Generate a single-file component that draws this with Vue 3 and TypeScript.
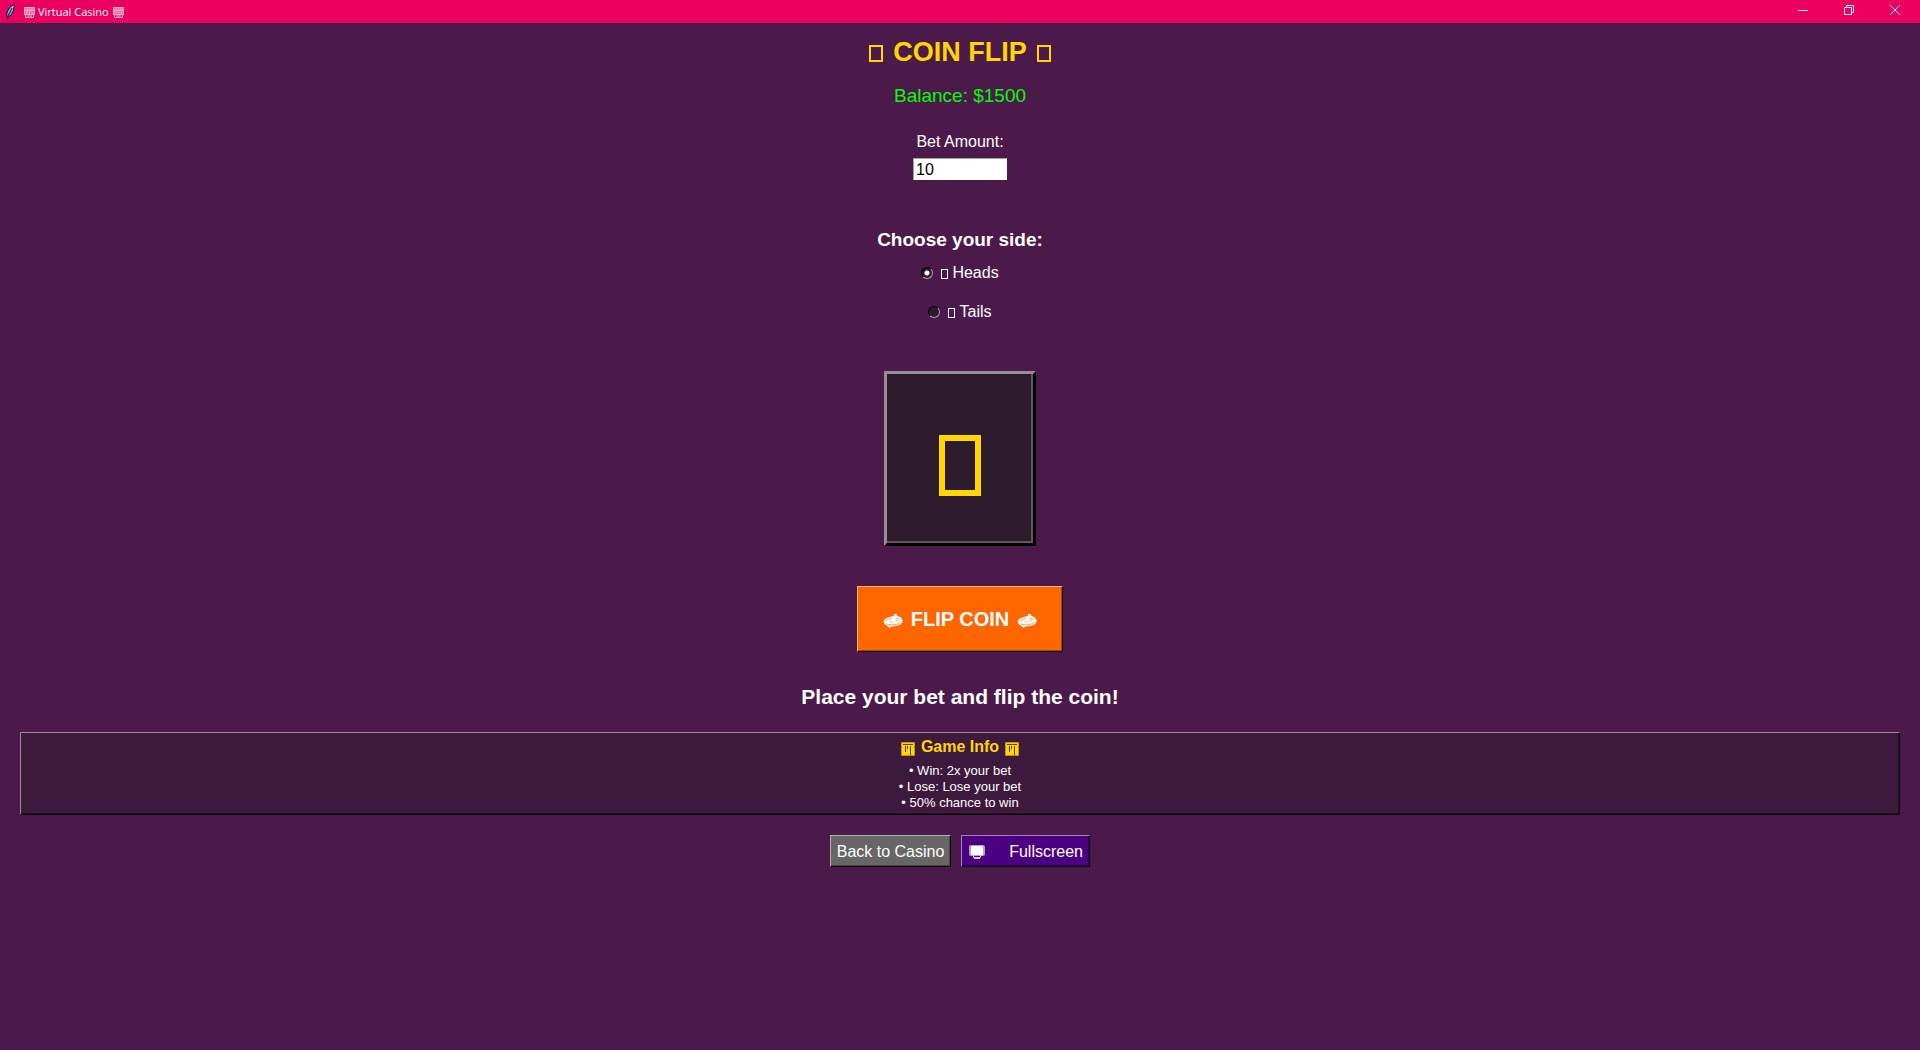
<script setup lang="ts">
import { ref } from 'vue'

const bet = ref('10')
const side = ref('heads')
const sides = [
  { value: 'heads', label: 'Heads' },
  { value: 'tails', label: 'Tails' },
]
const rules = ['Win: 2x your bet', 'Lose: Lose your bet', '50% chance to win']
</script>

<template>
  <div class="window">
    <header class="titlebar">
      <svg class="feather" viewBox="0 0 16 16" aria-hidden="true">
        <path d="M12.5 0.5L8.5 2.5L5.5 7L4.5 11L6 13L9.5 10.5L11.5 6.5Z" fill="#6fa3e0" stroke="#101828" />
        <path d="M11 2.5L7 9" stroke="#d3e6ff" fill="none" />
        <path d="M10 4L6 12L5.5 16" stroke="#101828" fill="none" />
      </svg>
      <svg class="slot" viewBox="0 0 11 11" aria-hidden="true">
        <path class="tint" d="M0 0H11V8H0Z" />
        <path d="M0.5 0.5H10.5V7.5H0.5ZM1.5 8V10.5H9.5V8M0 3.5H11M2.5 2H4M5 2H6M7 2H9M2 5.5H3.5M5 5.5H6M7.5 5.5H9M3 9H8" />
      </svg>
      <span class="caption">Virtual Casino</span>
      <svg class="slot" viewBox="0 0 11 11" aria-hidden="true">
        <path class="tint" d="M0 0H11V8H0Z" />
        <path d="M0.5 0.5H10.5V7.5H0.5ZM1.5 8V10.5H9.5V8M0 3.5H11M2.5 2H4M5 2H6M7 2H9M2 5.5H3.5M5 5.5H6M7.5 5.5H9M3 9H8" />
      </svg>
      <div class="controls">
        <button type="button" aria-label="Minimize">
          <svg viewBox="0 0 10 10"><path d="M0 5.5H10" /></svg>
        </button>
        <button type="button" aria-label="Restore">
          <svg viewBox="0 0 10 10"><path d="M0.5 2.5H7.5V9.5H0.5ZM2.5 2.5V0.5H9.5V7.5H7.5" /></svg>
        </button>
        <button type="button" aria-label="Close">
          <svg viewBox="0 0 10 10"><path d="M0 0L10 10M10 0L0 10" /></svg>
        </button>
      </div>
    </header>

    <main class="game">
      <h1><i class="box"></i><span>COIN FLIP</span><i class="box"></i></h1>
      <p class="balance">Balance: $1500</p>

      <label class="bet-label" for="bet">Bet Amount:</label>
      <input id="bet" v-model="bet" class="bet" type="text" />

      <fieldset class="sides">
        <legend>Choose your side:</legend>
        <label v-for="s in sides" :key="s.value" class="side">
          <input v-model="side" type="radio" name="side" :value="s.value" />
          <i class="box"></i>
          <span>{{ s.label }}</span>
        </label>
      </fieldset>

      <div class="coin"><i class="box"></i></div>

      <button type="button" class="flip">
        <svg class="dice" viewBox="0 0 19 14" aria-hidden="true">
          <path class="solid" d="M0 7L2 4.5L6 3L10 2L11 0H13L14 2L17 3L19 6V8L17 10.5L13 12L8 12.5L6 14L4 12L1 10Z" />
          <path class="gap" d="M2 7.5L5 5L8 4.5M12 4L16 5.5M3 10L8 11L13 10.5L17 8M7 7L9 8.5M12 7L14 6" />
        </svg>
        <span>FLIP COIN</span>
        <svg class="dice" viewBox="0 0 19 14" aria-hidden="true">
          <path class="solid" d="M0 7L2 4.5L6 3L10 2L11 0H13L14 2L17 3L19 6V8L17 10.5L13 12L8 12.5L6 14L4 12L1 10Z" />
          <path class="gap" d="M2 7.5L5 5L8 4.5M12 4L16 5.5M3 10L8 11L13 10.5L17 8M7 7L9 8.5M12 7L14 6" />
        </svg>
      </button>

      <p class="message">Place your bet and flip the coin!</p>

      <section class="info">
        <h2>
          <svg class="chart" viewBox="0 0 14 14" aria-hidden="true">
            <path d="M1 1H13V13H1Z" />
            <path class="frame" d="M0.5 0.5H13.5V13.5H0.5Z" />
            <path class="dark" d="M2 2.5H12M4.5 4V10M9.5 4V13M6.5 4V7" />
          </svg>
          <span>Game Info</span>
          <svg class="chart" viewBox="0 0 14 14" aria-hidden="true">
            <path d="M1 1H13V13H1Z" />
            <path class="frame" d="M0.5 0.5H13.5V13.5H0.5Z" />
            <path class="dark" d="M2 2.5H12M4.5 4V10M9.5 4V13M6.5 4V7" />
          </svg>
        </h2>
        <ul>
          <li v-for="r in rules" :key="r">• {{ r }}</li>
        </ul>
      </section>

      <nav class="actions">
        <button type="button" class="back">Back to Casino</button>
        <button type="button" class="full">
          <svg class="screen" viewBox="0 0 16 14" aria-hidden="true">
            <rect x="0" y="0" width="16" height="11" rx="2" fill="#b8a0c8" />
            <rect x="2" y="1" width="12" height="9" rx="1" fill="#fff" />
            <path d="M4.5 10V12.5H11.5V10M5 13.5H11" fill="none" stroke="#d8c8e4" />
          </svg>
          <span>Fullscreen</span>
        </button>
      </nav>
    </main>
  </div>
</template>

<style>
body {
  margin: 0;
  background: #4b1a4b;
}
</style>

<style scoped>
.window {
  min-height: 100vh;
  background: #4b1a4b;
  color: #fff;
  font: 16px/20px "Liberation Sans", Arial, sans-serif;
}
.window * {
  box-sizing: border-box;
}
.window button,
.window input {
  font: inherit;
  color: inherit;
  margin: 0;
}
.titlebar {
  display: flex;
  align-items: center;
  height: 23px;
  padding: 0 2px 0 2px;
  background: #eb005f;
}
.feather {
  width: 16px;
  height: 16px;
  margin-right: 6px;
}
.slot {
  width: 11px;
  height: 11px;
  margin-top: 1px;
  fill: none;
  stroke: #ffb4d2;
}
.slot .tint {
  fill: #f56a9f;
  stroke: none;
}
.caption {
  margin: 0 4px 0 3px;
  font: 11px/16px "Open Sans", "Noto Sans", sans-serif;
}
.controls {
  display: flex;
  align-self: stretch;
  margin-left: auto;
}
.controls button {
  display: flex;
  align-items: center;
  justify-content: center;
  width: 46px;
  padding: 0 0 3px;
  border: 0;
  background: none;
}
.controls svg {
  width: 10px;
  height: 10px;
  fill: none;
  stroke: #fff;
}
.game {
  display: flex;
  flex-direction: column;
  align-items: center;
  padding: 13px 20px 40px;
}
h1,
h2,
p,
ul {
  margin: 0;
}
.box {
  display: block;
  width: 7px;
  height: 10px;
  border: 1px solid currentColor;
}
h1 {
  display: flex;
  align-items: center;
  gap: 10px;
  color: #ffd700;
  font-size: 27px;
  line-height: 32px;
}
h1 .box {
  width: 14px;
  height: 17px;
  margin-top: 2px;
  border-width: 2px;
}
.balance {
  margin-top: 16px;
  color: #00ff00;
  font-size: 19px;
  line-height: 24px;
}
.bet-label {
  margin-top: 24px;
}
.window .bet {
  width: 94px;
  height: 22px;
  margin-top: 6px;
  padding: 2px 2px 0;
  border: 1px solid #fff;
  border-top-color: #a0a0a0;
  border-left-color: #a0a0a0;
  background: #fff;
  color: #000;
}
.sides {
  display: flex;
  flex-direction: column;
  align-items: center;
  margin: 48px 0 0;
  padding: 0;
  border: 0;
}
legend {
  margin-bottom: 11px;
  padding: 0;
  font-size: 19px;
  font-weight: bold;
  line-height: 24px;
}
.side {
  display: flex;
  align-items: center;
}
.side + .side {
  margin-top: 19px;
}
.side .box {
  margin: 1px 4px 0 8px;
}
.side input {
  appearance: none;
  width: 12px;
  height: 12px;
  border: 1px solid;
  border-color: #000 #b09ab0 #b09ab0 #000;
  border-radius: 50%;
  background: #2d1b2d;
}
.side input:checked {
  background: radial-gradient(circle, #fff 2px, #2d1b2d 3px);
}
.coin {
  display: flex;
  justify-content: center;
  width: 152px;
  height: 175px;
  margin-top: 49px;
  padding-top: 61px;
  border: 3px solid;
  border-color: #968d96 #000 #000 #968d96;
  background: #2d1b2d;
  box-shadow: inset -2px -2px #62545f;
  color: #ffd700;
}
.coin .box {
  width: 42px;
  height: 61px;
  border-width: 6px;
}
.flip,
.actions button {
  display: flex;
  align-items: center;
  justify-content: center;
  border: 1px solid;
}
.window .flip {
  gap: 8px;
  width: 206px;
  height: 66px;
  margin-top: 40px;
  padding: 0;
  border-color: #ffb27f #000 #000 #ffb27f;
  background: #ff6600;
  box-shadow: inset -1px -1px #b34700;
  font-size: 20px;
  font-weight: bold;
}
.dice {
  width: 20px;
  height: 14px;
  margin-top: 4px;
  fill: none;
  stroke: none;
}
.dice .solid {
  fill: currentColor;
}
.dice .gap {
  stroke: #ff9a55;
}
.message {
  margin-top: 33px;
  font-size: 21px;
  font-weight: bold;
  line-height: 24px;
}
.info {
  align-self: stretch;
  height: 83px;
  margin-top: 23px;
  padding-top: 4px;
  border: 1px solid;
  border-color: #9c8a9c #000 #000 #9c8a9c;
  background: #3d1a3d;
  box-shadow: inset -1px -1px #281128;
  text-align: center;
}
h2 {
  display: flex;
  align-items: center;
  justify-content: center;
  gap: 6px;
  color: #ffd700;
  font-size: 16px;
  line-height: 20px;
}
.chart {
  width: 14px;
  height: 14px;
  margin-top: 3px;
  fill: currentColor;
}
.chart .frame {
  fill: none;
  stroke: #b89a0c;
}
.chart .dark {
  fill: none;
  stroke: #5a3a2c;
}
ul {
  margin-top: 6px;
  padding: 0;
  list-style: none;
  font-size: 13px;
  line-height: 16px;
}
.actions {
  display: flex;
  gap: 10px;
  margin-top: 20px;
}
.actions button {
  height: 32px;
  padding: 2px 6px 0;
  white-space: nowrap;
}
.actions .back {
  width: 121px;
  border-color: #b2b2b2 #000 #000 #b2b2b2;
  background: #666;
  box-shadow: inset -1px -1px #474747;
}
.actions .full {
  justify-content: space-between;
  width: 129px;
  border-color: #a57fc0 #000 #000 #a57fc0;
  background: #4b0082;
  box-shadow: inset -1px -1px #34005b;
}
.screen {
  width: 16px;
  height: 14px;
  margin-left: 1px;
}
</style>
